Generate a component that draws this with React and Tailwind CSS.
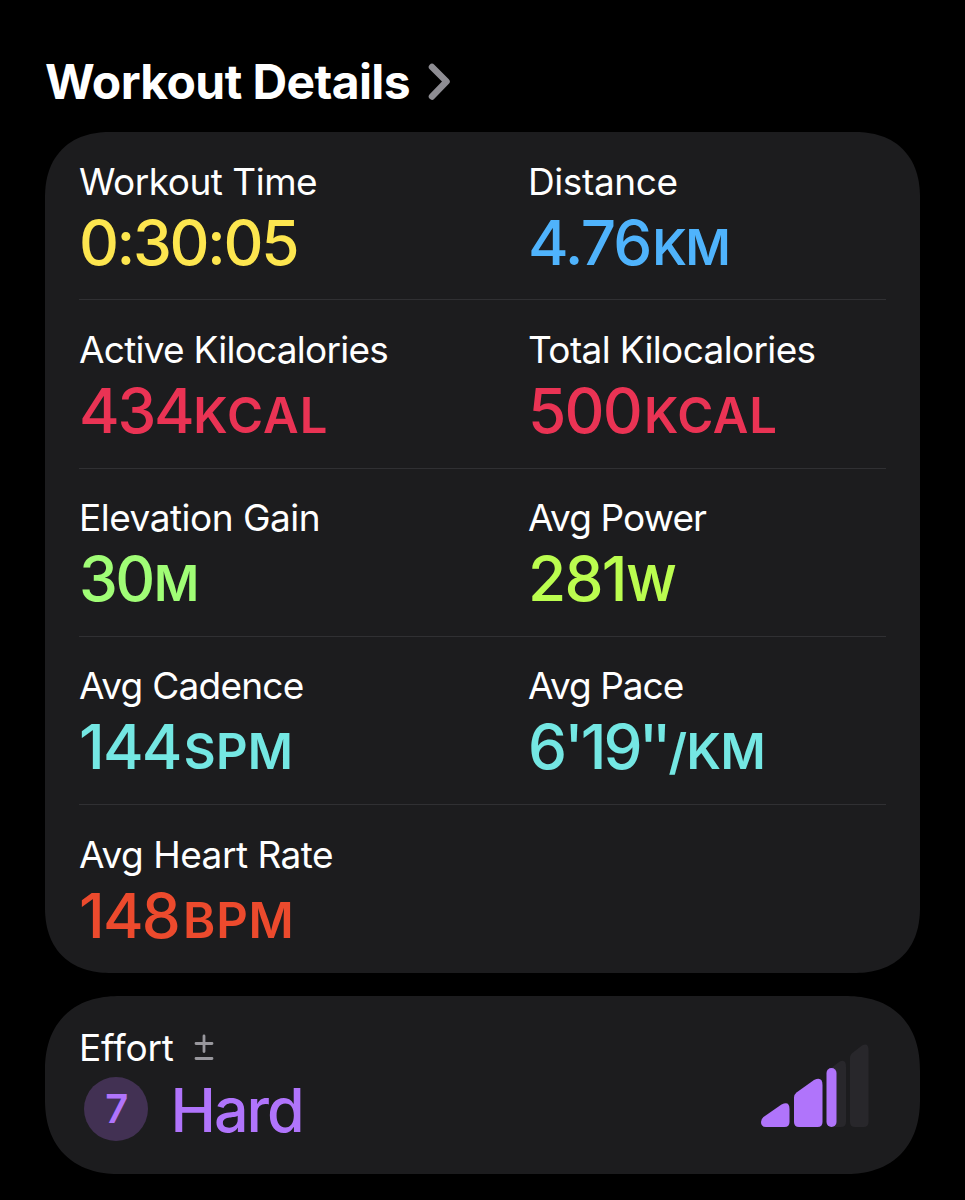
import React from 'react';

// Seconds mark sits tighter than the default apostrophe spacing
const pace = (
  <>
    6'19<span className="ml-[-1px] tracking-[-6px]">''</span>
  </>
);

const rows = [
  [
    { label: 'Workout Time', fit: 'tracking-[-0.5px]', value: '0:30:05', valueFit: 'tracking-[-2.4px]', color: 'text-[#fde64f]' },
    { label: 'Distance', fit: 'tracking-[-0.4px]', value: '4.76', unit: 'KM', unitFit: 'ml-[2px] tracking-[-1.5px]', color: 'text-[#4fb3fc]' },
  ],
  [
    { label: 'Active Kilocalories', fit: 'tracking-[-0.75px]', value: '434', valueFit: 'tracking-[-2.3px]', unit: 'KCAL', unitFit: 'ml-[1px] tracking-[1.1px]', color: 'text-[#ea3354]' },
    { label: 'Total Kilocalories', fit: 'tracking-[-0.65px]', value: '500', unit: 'KCAL', unitFit: 'ml-[3px] tracking-[0.7px]', color: 'text-[#ea3354]' },
  ],
  [
    { label: 'Elevation Gain', fit: 'tracking-[-0.5px]', value: '30', valueFit: 'tracking-[-2.5px]', unit: 'M', unitFit: 'ml-[1px]', color: 'text-[#a0fd76]' },
    { label: 'Avg Power', fit: 'tracking-[-0.9px]', value: '281', unit: 'W', unitFit: 'ml-[1px]', color: 'text-[#bbfd4f]' },
  ],
  [
    { label: 'Avg Cadence', fit: 'tracking-[-0.75px]', value: '144', unit: 'SPM', unitFit: 'ml-[3px] tracking-[0.3px]', color: 'text-[#74e7e3]' },
    { label: 'Avg Pace', fit: 'tracking-[-1px]', value: pace, valueFit: 'tracking-[-2.9px]', unit: '/KM', unitFit: 'ml-[3px] tracking-[-0.5px]', color: 'text-[#74e7e3]' },
  ],
  [{ label: 'Avg Heart Rate', fit: 'tracking-[-0.5px]', value: '148', unit: 'BPM', unitFit: 'ml-[4px] tracking-[0.8px]', color: 'text-[#ec4a2d]' }],
];

function Stat({ label, fit, value, valueFit = 'tracking-[-1.8px]', unit, unitFit, color }) {
  return (
    <div className="whitespace-nowrap">
      <div className={`text-[37px] leading-[44px] text-white ${fit}`}>{label}</div>
      <div className={`mt-px text-[62px] font-medium leading-[76px] ${valueFit} ${color}`}>
        {value}
        {unit && <span className={`text-[49px] font-semibold ${unitFit}`}>{unit}</span>}
      </div>
    </div>
  );
}

// Effort level indicator, third bar is only half filled
function EffortBars() {
  return (
    <svg width="110" height="86" viewBox="0 0 110 86" className="shrink-0">
      <g fill="#28272b">
        <path d="M70 26 L79 19 Q86 15 86 24 V79 Q86 84 81 84 H70 Z" />
        <path d="M90 15 Q90 11.500 93 9.500 L102 2.500 Q108.500 -1 108.500 7 V79 Q108.500 84 103.500 84 H95 Q90 84 90 79 Z" />
      </g>
      <g fill="#b074fb">
        <path d="M3.500 74 L21.500 61.500 Q29.500 57.500 29.500 66 V79 Q29.500 84 24.500 84 H6 Q1 84 1 79 Q1 76 3.500 74 Z" />
        <path d="M34 54.500 Q34 51.500 36.500 49.500 L54 37 Q62.500 33 62.500 42 V79 Q62.500 84 57.500 84 H39 Q34 84 34 79 Z" />
        <rect x="66.500" y="25" width="10" height="59" rx="5" />
      </g>
    </svg>
  );
}

export default function App() {
  return (
    <div className="h-[1200px] w-[965px] overflow-hidden bg-black pl-[45px] pr-[45px] pt-[53px] font-['Inter','Liberation_Sans',sans-serif]">
      <div className="flex h-[58px] items-center">
        <h1 className="whitespace-nowrap text-[48px] font-bold leading-[58px] tracking-[-0.6px] text-white">
          Workout Details
        </h1>
        <svg width="24" height="38" viewBox="0 0 24 38" className="ml-[18px] fill-none stroke-[#8e8d93]">
          <path d="M4 4 L18.500 18.500 L4 33.500" strokeWidth="6.500" strokeLinecap="round" strokeLinejoin="round" />
        </svg>
      </div>

      <div className="mt-[21px] h-[841px] rounded-[66px] bg-[#1c1c1e] px-[34px] [corner-shape:superellipse(1.2)]">
        {rows.map((row, i) => (
          <div
            key={i}
            className={`grid h-[168.3px] grid-cols-[449px_1fr] pt-[27.5px] ${i < rows.length - 1 ? 'border-b border-[#303033]' : ''}`}
          >
            {row.map((stat) => (
              <Stat key={stat.label} {...stat} />
            ))}
          </div>
        ))}
      </div>

      <div className="mt-[23px] flex h-[178px] items-start justify-between rounded-[75px] bg-[#1c1c1e] pl-[34px] pr-[50px] [corner-shape:superellipse(1.2)]">
        <div className="pt-[30px]">
          <div className="flex h-[44px] items-center text-[37px] leading-[44px] tracking-[-0.2px] text-white">
            Effort
            <svg width="20" height="28" viewBox="0 0 20 28" className="ml-[20px] fill-none stroke-[#98979d]">
              <path d="M10 2 V17.500 M2 9.500 H18 M2 24.500 H18" strokeWidth="2.800" strokeLinecap="round" />
            </svg>
          </div>
          <div className="flex items-start">
            <div className="ml-[5px] mt-[7px] flex size-[63.5px] items-center justify-center rounded-full bg-[#423153] pl-[2px] text-[40px] font-semibold text-[#b074fb]">
              7
            </div>
            <div className="ml-[23px] mt-[3px] text-[61px] font-medium leading-[74px] tracking-[-2px] text-[#b074fb]">Hard</div>
          </div>
        </div>
        <div className="pt-[47px]">
          <EffortBars />
        </div>
      </div>
    </div>
  );
}
